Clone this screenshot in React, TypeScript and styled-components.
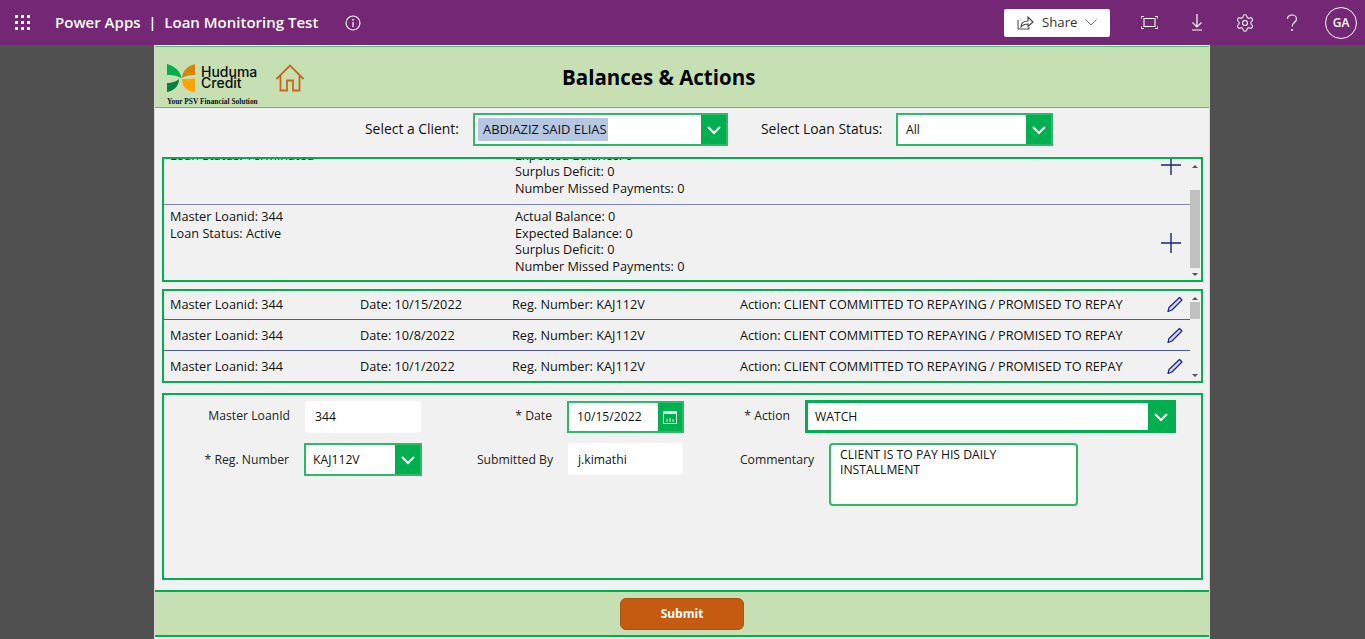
import { Settings } from 'lucide-react'
import styled, { createGlobalStyle } from 'styled-components'

const GREEN = '#00b050'
const NAVY = '#1a2478'

const GlobalStyle = createGlobalStyle`
  html, body {
    margin: 0;
    padding: 0;
    height: 100%;
    overflow: hidden;
    background: #505050;
    font-family: 'Open Sans', 'Liberation Sans', sans-serif;
  }
`

const balances = [
  { id: 1, status: 'Terminated' },
  { id: 2, status: 'Active' },
]

const actions = ['10/15/2022', '10/8/2022', '10/1/2022']

function Chevron() {
  return (
    <svg width="16" height="10" viewBox="0 0 16 10">
      <path d="M2 2l6 6 6-6" fill="none" stroke="#fff" strokeWidth="2" />
    </svg>
  )
}

function Plus() {
  return (
    <svg width="20" height="20" viewBox="0 0 20 20">
      <path d="M0 10h20M10 0v20" stroke={NAVY} strokeWidth="1.4" />
    </svg>
  )
}

function Pencil() {
  return (
    <svg width="16" height="17" viewBox="0 0 16 17">
      <path d="M1 15.5l1-4L12.5 1.500 15 4 5 14z" fill="#cfd5ee" stroke={NAVY} strokeWidth="1.2" strokeLinejoin="round" />
    </svg>
  )
}

function Logo() {
  return (
    <LogoBox>
      <LogoTop>
        <svg width="28" height="28" viewBox="0 0 28 28">
          <path d="M0 0C8 2 14 8 14.5 14.5 9 11 4 11 0 11z" fill="#00b050" />
          <path d="M0 19C5 19 10 17 12 15 12 22 7 27 0 28z" fill="#0b7f3f" />
          <path d="M28 0C20 2 15 8 15 14 20 11 24 11 28 11z" fill="#d98300" />
          <path d="M15 15C20 15 25 15 28 14.500V28C20 28 15 22 15 15z" fill="#ffa300" />
        </svg>
        <LogoWords>
          Huduma
          <br />
          Credit
        </LogoWords>
      </LogoTop>
      <LogoTag>Your PSV Financial Solution</LogoTag>
    </LogoBox>
  )
}

function HomeIcon() {
  return (
    <HomeLink>
      <svg width="30" height="28" viewBox="0 0 30 28">
        <path
          d="M1.5 15L15 1.5 28.5 15M5.5 11.5V26.5H12V16.5H18V26.5H24.5V11.5"
          fill="none"
          stroke="#c8661e"
          strokeWidth="1.8"
        />
      </svg>
    </HomeLink>
  )
}

type SelectProps = { value: string; $width: number; $inset?: number; $selected?: boolean; $thick?: boolean }

function Select({ value, $width, $inset = 7, $selected, $thick }: SelectProps) {
  return (
    <SelectBox $width={$width} $thick={$thick}>
      <SelectValue $inset={$inset}>{$selected ? <Highlight>{value}</Highlight> : value}</SelectValue>
      <SelectButton>
        <Chevron />
      </SelectButton>
    </SelectBox>
  )
}

export default function App() {
  return (
    <>
      <GlobalStyle />
      <TopBar>
        <Waffle>
          {Array.from({ length: 9 }).map((_, i) => (
            <i key={i} />
          ))}
        </Waffle>
        <AppTitle>Power Apps &nbsp;|&nbsp; Loan Monitoring Test</AppTitle>
        <InfoIcon>
          <svg width="16" height="16" viewBox="0 0 16 16">
            <circle cx="8" cy="8" r="7" fill="none" stroke="#fff" strokeWidth="1.1" />
            <path d="M8 7v5" stroke="#fff" strokeWidth="1.2" />
            <circle cx="8" cy="4.8" r=".9" fill="#fff" />
          </svg>
        </InfoIcon>
        <Spacer />
        <ShareButton>
          <svg width="17" height="14" viewBox="0 0 17 14">
            <path d="M1 4v9h11v-2" fill="none" stroke="#555" strokeWidth="1.1" />
            <path d="M4 11c0-4 3-6 7-6V1l5 5-5 4.500V8c-3 0-5 .6-7 3z" fill="none" stroke="#444" strokeWidth="1.1" />
          </svg>
          <span>Share</span>
          <svg width="12" height="7" viewBox="0 0 12 7">
            <path d="M.5.5L6 6l5.500-5.500" fill="none" stroke="#777" strokeWidth="1" />
          </svg>
        </ShareButton>
        <TopIcon $left={31}>
          <svg width="17" height="13" viewBox="0 0 17 13">
            <path d="M3 2.500h11v8H3z" fill="none" stroke="#fff" strokeWidth="1.1" />
            <path d="M.5 2.500V.5H3M14 .5h2.500v2M.5 10.500v2H3M14 12.500h2.500v-2" fill="none" stroke="#fff" />
          </svg>
        </TopIcon>
        <TopIcon $left={33}>
          <svg width="12" height="17" viewBox="0 0 12 17">
            <path d="M6 0v13M1.500 8.500L6 13l4.500-4.500M1 16h10" fill="none" stroke="#fff" strokeWidth="1.2" />
          </svg>
        </TopIcon>
        <TopIcon $left={32}>
          <Settings size={20} strokeWidth={1.3} color="#fff" />
        </TopIcon>
        <TopIcon $left={31}>
          <svg width="12" height="18" viewBox="0 0 12 18">
            <path d="M1.500 5c0-2.500 2-4 4.500-4s4.500 1.700 4.500 4c0 3.400-4.500 3.600-4.500 7.500" fill="none" stroke="#fff" strokeWidth="1.2" />
            <circle cx="6" cy="16" r=".9" fill="#fff" />
          </svg>
        </TopIcon>
        <Avatar>GA</Avatar>
      </TopBar>

      <Canvas>
        <HeaderBand>
          <Logo />
          <HomeIcon />
          <PageTitle>Balances &amp; Actions</PageTitle>
        </HeaderBand>

        <FilterRow>
          <FilterLabel>Select a Client:</FilterLabel>
          <Select value="ABDIAZIZ SAID ELIAS" $width={255} $inset={3} $selected />
          <FilterLabel $left={33}>Select Loan Status:</FilterLabel>
          <Select value="All" $width={157} $inset={8} />
        </FilterRow>

        <BalancePanel>
          <ScrollArea>
            <BalanceList>
              {balances.map((b) => (
                <BalanceRow key={b.id}>
                  <BalanceLeft>
                    <div>Master Loanid: 344</div>
                    <div>Loan Status: {b.status}</div>
                  </BalanceLeft>
                  <BalanceRight>
                    <div>Actual Balance: 0</div>
                    <div>Expected Balance: 0</div>
                    <div>Surplus Deficit: 0</div>
                    <div>Number Missed Payments: 0</div>
                  </BalanceRight>
                  <PlusCell>
                    <Plus />
                  </PlusCell>
                </BalanceRow>
              ))}
            </BalanceList>
          </ScrollArea>
          <ScrollBar>
            <ArrowUp />
            <Track $pad={22}>
              <Thumb $height={78} />
            </Track>
            <ArrowDown />
          </ScrollBar>
        </BalancePanel>

        <ActionPanel>
          <ScrollArea>
            <ActionList>
              {actions.map((d) => (
                <ActionRow key={d}>
                  <ActionCell $width={190}>Master Loanid: 344</ActionCell>
                  <ActionCell $width={152}>Date: {d}</ActionCell>
                  <ActionCell $width={228}>Reg. Number: KAJ112V</ActionCell>
                  <ActionCell $width={427}>Action: CLIENT COMMITTED TO REPAYING / PROMISED TO REPAY</ActionCell>
                  <Pencil />
                </ActionRow>
              ))}
            </ActionList>
          </ScrollArea>
          <ScrollBar>
            <ArrowUp />
            <Track $pad={2}>
              <Thumb $height={17} />
            </Track>
            <ArrowDown />
          </ScrollBar>
        </ActionPanel>

        <FormPanel>
          <FormRow>
            <FieldLabel $width={141}>Master LoanId</FieldLabel>
            <TextField $width={116}>344</TextField>
            <FieldLabel $width={146}>* Date</FieldLabel>
            <DateBox>
              <DateValue>10/15/2022</DateValue>
              <DateButton>
                <svg width="14" height="14" viewBox="0 0 14 14">
                  <path d="M.5 1.500h13v12H.5z" fill="none" stroke="#d5f0df" />
                  <path d="M1 1.500h12V4H1z" fill="#d5f0df" />
                  <path d="M4 9v3M7 8v4M10 9v3" stroke="#d5f0df" />
                </svg>
              </DateButton>
            </DateBox>
            <FieldLabel $width={121}>* Action</FieldLabel>
            <Select value="WATCH" $width={371} $thick />
          </FormRow>
          <FormRow>
            <FieldLabel $width={140} $top={8}>* Reg. Number</FieldLabel>
            <Select value="KAJ112V" $width={118} />
            <FieldLabel $width={146} $top={8}>Submitted By</FieldLabel>
            <TextField $width={115} $top={8}>j.kimathi</TextField>
            <FieldLabel $width={146} $top={8}>Commentary</FieldLabel>
            <CommentBox>CLIENT IS TO PAY HIS DAILY INSTALLMENT</CommentBox>
          </FormRow>
        </FormPanel>

        <FooterBand>
          <SubmitButton>Submit</SubmitButton>
        </FooterBand>
      </Canvas>
    </>
  )
}

const TopBar = styled.header`
  display: flex;
  align-items: center;
  height: 45px;
  background: #742774;
  color: #fff;
`

const Waffle = styled.div`
  display: grid;
  grid-template-columns: repeat(3, 3px);
  gap: 3px;
  margin-left: 15px;

  i {
    width: 3px;
    height: 3px;
    background: #fff;
  }
`

const AppTitle = styled.div`
  margin: 0 0 2px 25px;
  font-size: 15px;
  font-weight: 600;
  white-space: nowrap;
`

const InfoIcon = styled.div`
  display: flex;
  margin-left: 27px;
`

const Spacer = styled.div`
  flex: 1;
`

const ShareButton = styled.div`
  display: flex;
  align-items: center;
  width: 106px;
  height: 28px;
  box-sizing: border-box;
  padding-left: 13px;
  background: #fff;
  border-radius: 2px;
  color: #333;
  font-size: 13.2px;
  font-weight: 500;

  span {
    margin: 0 8px 2px 8px;
  }
`

const TopIcon = styled.div<{ $left: number }>`
  display: flex;
  margin-left: ${(p) => p.$left}px;
`

const Avatar = styled.div`
  display: grid;
  place-items: center;
  width: 30px;
  height: 30px;
  margin: 0 8px 0 27px;
  border: 1px solid #fff;
  border-radius: 50%;
  font-size: 12px;
  font-weight: 600;
`

const Canvas = styled.main`
  width: 1056px;
  height: 594px;
  margin-left: 154px;
  box-sizing: border-box;
  overflow: hidden;
  background: #f1f1f1;
  border-left: 1px solid #d8d8d8;
  border-right: 1px solid #d8d8d8;
  color: #111;
  font-size: 12.7px;
`

const HeaderBand = styled.div`
  position: relative;
  display: flex;
  align-items: flex-start;
  height: 62px;
  margin: 1px -1px 0;
  box-sizing: border-box;
  background: #c6e0b4;
  border: 1px solid #4fc27a;
`

const LogoBox = styled.div`
  margin: 16px 0 0 12px;
  width: 92px;
`

const LogoTop = styled.div`
  display: flex;
  align-items: center;
  height: 29px;
`

const LogoWords = styled.div`
  margin: 0 0 2px 6px;
  font-family: Inter, 'Liberation Sans', sans-serif;
  font-size: 14px;
  font-weight: 500;
  line-height: 11px;
  color: #0c0c0c;
`

const LogoTag = styled.div`
  margin-top: 5px;
  font-family: 'Liberation Serif', serif;
  font-size: 7.4px;
  font-weight: 700;
  white-space: nowrap;
`

const HomeLink = styled.div`
  margin: 17px 0 0 16px;
`

const PageTitle = styled.h1`
  position: absolute;
  left: 407px;
  top: 17px;
  margin: 0;
  font-size: 20.5px;
  font-weight: 700;
  line-height: 27px;
  color: #000;
`

const FilterRow = styled.div`
  display: flex;
  align-items: center;
  height: 33px;
  margin-top: 5px;
  padding-left: 210px;
`

const FilterLabel = styled.div<{ $left?: number }>`
  width: ${(p) => (p.$left ? 135 : 108)}px;
  margin: 0 0 2px ${(p) => p.$left ?? 0}px;
  font-size: 13.9px;
  font-weight: 500;
  white-space: nowrap;
`

const SelectBox = styled.div<{ $width: number; $thick?: boolean }>`
  display: flex;
  flex: none;
  width: ${(p) => p.$width}px;
  height: 33px;
  margin-top: ${(p) => (p.$thick ? -1 : 0)}px;
  box-sizing: border-box;
  background: #fff;
  border: ${(p) => (p.$thick ? `3px solid ${GREEN}` : '2px solid #2cba68')};
`

const SelectValue = styled.div<{ $inset: number }>`
  flex: 1;
  display: flex;
  align-items: center;
  padding-left: ${(p) => p.$inset}px;
  font-size: 12.2px;
  white-space: nowrap;
`

const Highlight = styled.span`
  width: 130px;
  height: 23px;
  box-sizing: border-box;
  padding-left: 5px;
  background: #b6c7e2;
  font-size: 12.9px;
  line-height: 23px;
`

const SelectButton = styled.div`
  display: grid;
  place-items: center;
  width: 25px;
  background: ${GREEN};
`

const Panel = styled.section`
  display: flex;
  width: 1041px;
  box-sizing: border-box;
  margin-left: 7px;
  border: 2px solid ${GREEN};
`

const BalancePanel = styled(Panel)`
  height: 125px;
  margin-top: 11px;
`

const ActionPanel = styled(Panel)`
  height: 94px;
  margin-top: 7px;
`

const ScrollArea = styled.div`
  flex: 1;
  overflow: hidden;
`

const BalanceList = styled.div`
  margin-top: -32px;
`

const BalanceRow = styled.div`
  display: flex;
  height: 78px;
  box-sizing: border-box;
  padding: 3px 0 0 6px;
  border-bottom: 1px solid #7d84b8;
  line-height: 16.5px;
  font-weight: 500;
`

const BalanceLeft = styled.div`
  width: 345px;
`

const BalanceRight = styled.div`
  flex: 1;
`

const PlusCell = styled.div`
  width: 29px;
  padding-top: 25px;
`

const ScrollBar = styled.div`
  display: flex;
  flex-direction: column;
  width: 10px;
  margin-right: 1px;
`

const ArrowUp = styled.div`
  flex: none;
  width: 0;
  height: 0;
  margin: 6px auto 0;
  border: 3px solid transparent;
  border-top: 0;
  border-bottom: 3px solid #555;
`

const ArrowDown = styled.div`
  flex: none;
  width: 0;
  height: 0;
  margin: 0 auto 4px;
  border: 3px solid transparent;
  border-bottom: 0;
  border-top: 3px solid #555;
`

const Track = styled.div<{ $pad: number }>`
  flex: 1;
  padding-top: ${(p) => p.$pad}px;
`

const Thumb = styled.div<{ $height: number }>`
  height: ${(p) => p.$height}px;
  background: #c0c0c0;
`

const ActionList = styled.div`
  margin-top: -2px;
`

const ActionRow = styled.div`
  display: flex;
  align-items: center;
  height: 31px;
  box-sizing: border-box;
  padding-left: 6px;
  border-bottom: 1px solid #5058a0;
  font-weight: 500;
  white-space: nowrap;

  &:last-child {
    height: 30px;
    border-bottom: 0;
  }
`

const ActionCell = styled.div<{ $width: number }>`
  flex: none;
  width: ${(p) => p.$width}px;
`

const FormPanel = styled(Panel)`
  flex-direction: column;
  gap: 10px;
  height: 187px;
  margin-top: 10px;
  padding-top: 6px;
  font-size: 12.2px;
`

const FormRow = styled.div`
  display: flex;
  align-items: flex-start;
`

const FieldLabel = styled.div<{ $width: number; $top?: number }>`
  flex: none;
  width: ${(p) => p.$width}px;
  box-sizing: border-box;
  padding: ${(p) => p.$top ?? 6}px 15px 0 0;
  text-align: right;
  color: #222;
  white-space: nowrap;
`

const TextField = styled.div<{ $width: number; $top?: number }>`
  flex: none;
  width: ${(p) => p.$width}px;
  height: 32px;
  box-sizing: border-box;
  padding: ${(p) => p.$top ?? 7}px 10px 0;
  background: #fff;
  border-radius: 3px;
`

const DateBox = styled.div`
  display: flex;
  flex: none;
  width: 117px;
  height: 32px;
  box-sizing: border-box;
  background: #fff;
  border: 2px solid #2cba68;
`

const DateValue = styled.div`
  flex: 1;
  padding: 5px 0 0 8px;
`

const DateButton = styled.div`
  display: grid;
  place-items: center;
  width: 24px;
  background: ${GREEN};
`

const CommentBox = styled.div`
  flex: none;
  width: 249px;
  height: 63px;
  box-sizing: border-box;
  padding: 2px 40px 0 9px;
  background: #fff;
  border: 2px solid #2cba68;
  border-radius: 4px;
  line-height: 15px;
`

const FooterBand = styled.div`
  display: flex;
  align-items: center;
  height: 47px;
  margin: 10px -1px 0 0;
  padding-left: 465px;
  box-sizing: border-box;
  background: #c6e0b4;
  border-top: 2px solid ${GREEN};
  border-bottom: 2px solid ${GREEN};
`

const SubmitButton = styled.button`
  width: 124px;
  height: 32px;
  padding: 0;
  background: #c55a11;
  border: 1px solid #a8560f;
  border-radius: 6px;
  color: #fff;
  font-family: inherit;
  font-size: 12px;
  font-weight: 700;
`
